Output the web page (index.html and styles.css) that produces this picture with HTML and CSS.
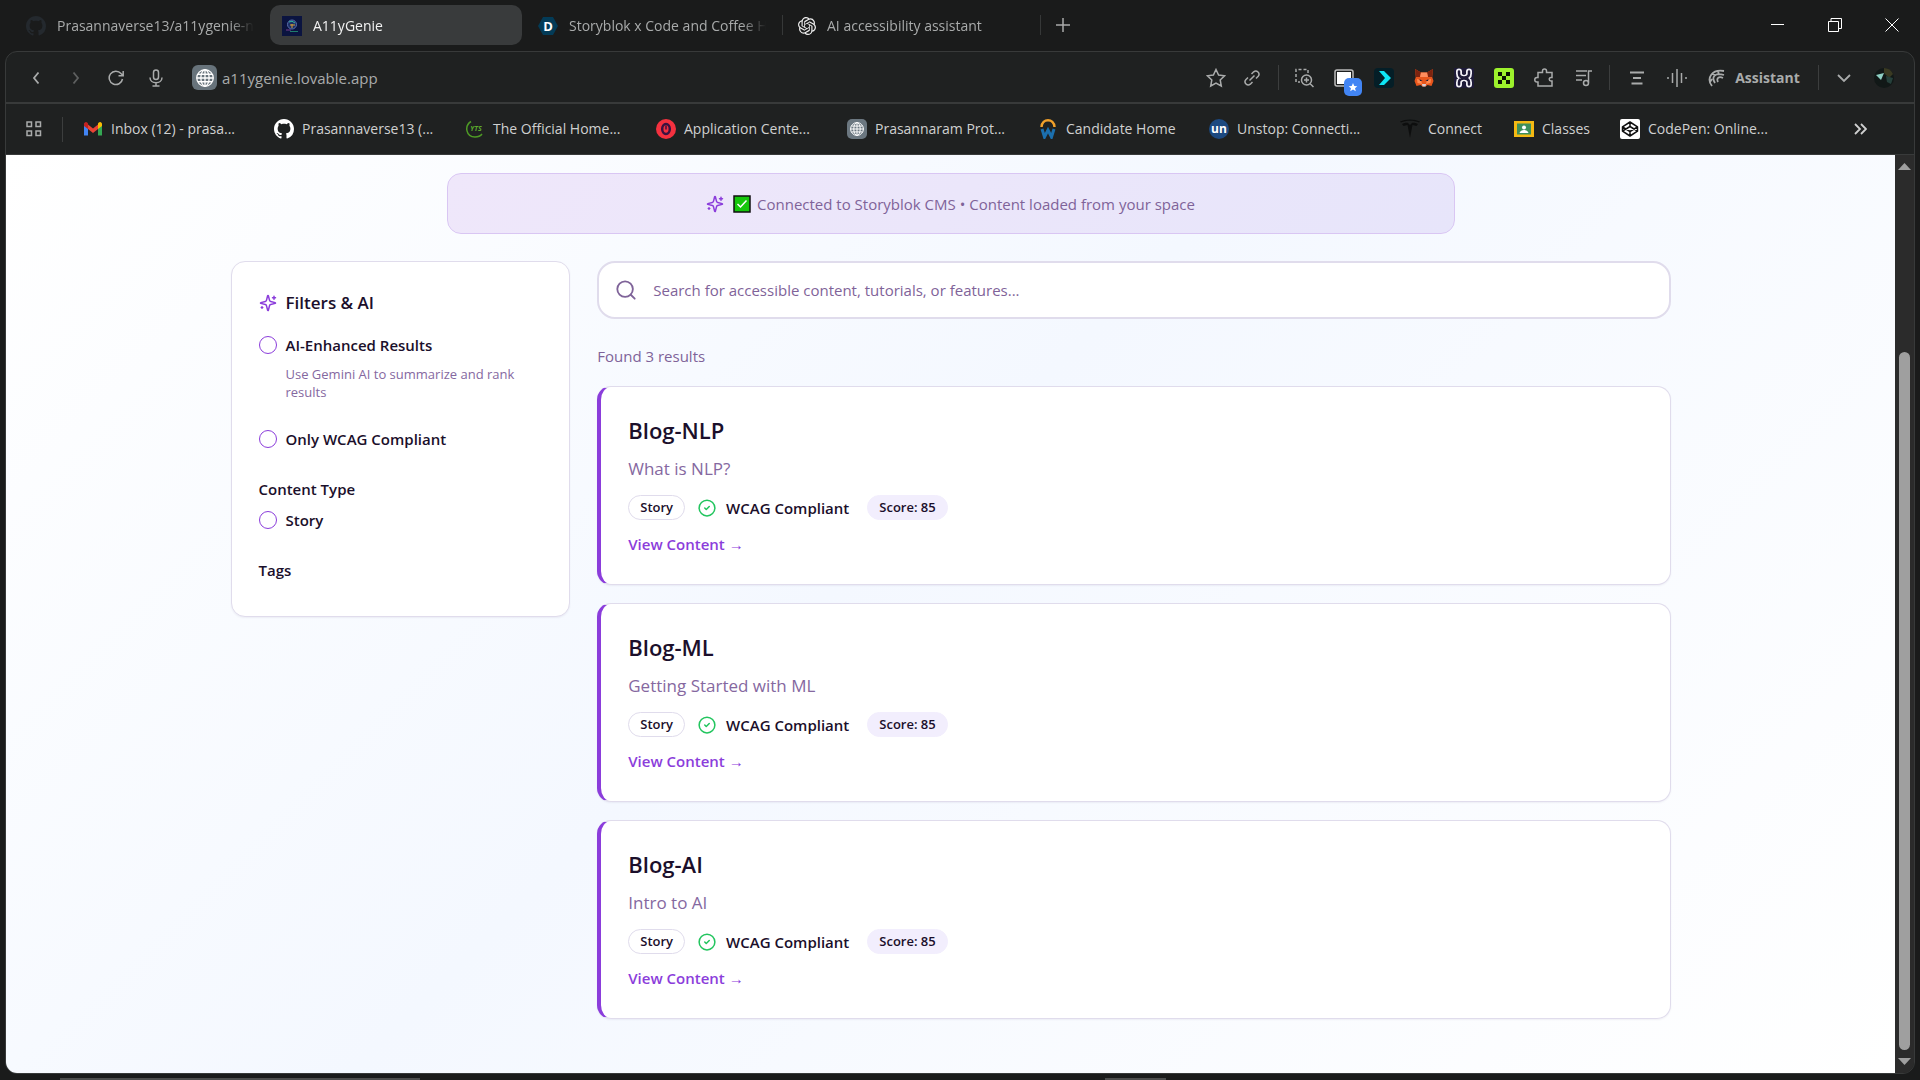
FILE: index.html
```html
<!DOCTYPE html>
<html lang="en">
<head>
<meta charset="utf-8">
<meta name="viewport" content="width=device-width, initial-scale=1">
<title>A11yGenie</title>
<link rel="stylesheet" href="styles.css">
</head>
<body>
<svg class="defs" aria-hidden="true">
  <symbol id="i-github" viewBox="0 0 16 16"><path fill="currentColor" d="M8 0C3.58 0 0 3.58 0 8c0 3.54 2.29 6.53 5.47 7.59.4.07.55-.17.55-.38 0-.19-.01-.82-.01-1.49-2.01.37-2.53-.49-2.69-.94-.09-.23-.48-.94-.82-1.13-.28-.15-.68-.52-.01-.53.63-.01 1.08.58 1.23.82.72 1.21 1.87.87 2.33.66.07-.52.28-.87.51-1.07-1.78-.2-3.64-.89-3.64-3.95 0-.87.31-1.59.82-2.15-.08-.2-.36-1.02.08-2.12 0 0 .67-.21 2.2.82.64-.18 1.32-.27 2-.27s1.36.09 2 .27c1.53-1.04 2.2-.82 2.2-.82.44 1.1.16 1.92.08 2.12.51.56.82 1.27.82 2.15 0 3.07-1.87 3.75-3.65 3.95.29.25.54.73.54 1.48 0 1.07-.01 1.93-.01 2.2 0 .21.15.46.55.38A8.01 8.01 0 0 0 16 8c0-4.42-3.58-8-8-8z"/></symbol>
  <symbol id="i-globe" viewBox="0 0 24 24"><g fill="none" stroke="currentColor" stroke-width="1.700"><circle cx="12" cy="12" r="11"/><ellipse cx="12" cy="12" rx="5.500" ry="11"/><path d="M1 12h22M12 1v22M2.500 7h19M2.500 17h19"/></g></symbol>
  <symbol id="i-sparkles" viewBox="0 0 24 24"><path fill="none" stroke="currentColor" stroke-width="2" stroke-linecap="round" stroke-linejoin="round" d="M9.937 15.5A2 2 0 0 0 8.5 14.063l-6.135-1.582a.5.5 0 0 1 0-.962L8.5 9.936A2 2 0 0 0 9.937 8.5l1.582-6.135a.5.5 0 0 1 .963 0L14.063 8.5A2 2 0 0 0 15.5 9.937l6.135 1.581a.5.5 0 0 1 0 .964L15.5 14.063a2 2 0 0 0-1.437 1.437l-1.582 6.135a.5.5 0 0 1-.963 0zM20 3v4M22 5h-4M4 17v2M5 18H3"/></symbol>
  <symbol id="i-check" viewBox="0 0 24 24"><g fill="none" stroke="currentColor" stroke-width="2" stroke-linecap="round" stroke-linejoin="round"><circle cx="12" cy="12" r="10.5"/><path d="m9 12 2 2 4-4"/></g></symbol>
</svg>

<header class="tabstrip">
  <nav class="tabs" aria-label="Tabs">
    <a class="tab" href="#t1"><svg class="ico20 dim-mark"><use href="#i-github"/></svg><span class="tab-title">Prasannaverse13/a11ygenie-nexus</span></a>
    <a class="tab tab-active" href="#t2"><svg class="ico20" viewBox="0 0 20 20"><rect width="20" height="20" fill="#0b1440"/><circle cx="10" cy="8.500" r="4.500" fill="#1c2f66" stroke="#5a6fae"/><path d="M7 6q3-2 6 1" stroke="#2fb7a0" fill="none"/><path d="M8 9h5M10 8v4" stroke="#d9a23c"/><path d="M4 14h5" stroke="#7a3f8f"/><path d="M8 15.500h8" stroke="#1f7d6c"/></svg><span class="tab-title">A11yGenie</span></a>
    <a class="tab" href="#t3"><svg class="ico20" viewBox="0 0 20 20"><path d="M5 1h10l5 9-5 9H5l-5-9z" fill="#033b57"/><text x="10" y="15" text-anchor="middle" class="glyph-d">D</text></svg><span class="tab-title">Storyblok x Code and Coffee Hackathon</span></a>
    <a class="tab tab-sep" href="#t4"><svg class="ico18" viewBox="0 0 24 24"><path fill="#eee" d="M22.2819 9.8211a5.9847 5.9847 0 0 0-.5157-4.9108 6.0462 6.0462 0 0 0-6.5098-2.9A6.0651 6.0651 0 0 0 4.9807 4.1818a5.9847 5.9847 0 0 0-3.9977 2.9 6.0462 6.0462 0 0 0 .7427 7.0966 5.98 5.98 0 0 0 .511 4.9107 6.051 6.051 0 0 0 6.5146 2.9001A5.9847 5.9847 0 0 0 13.2599 24a6.0557 6.0557 0 0 0 5.7718-4.2058 5.9894 5.9894 0 0 0 3.9977-2.9001 6.0557 6.0557 0 0 0-.7475-7.0729zm-9.022 12.6081a4.4755 4.4755 0 0 1-2.8764-1.0408l.1419-.0804 4.7783-2.7582a.7948.7948 0 0 0 .3927-.6813v-6.7369l2.02 1.1686a.071.071 0 0 1 .038.052v5.5826a4.504 4.504 0 0 1-4.4945 4.4944zm-9.6607-4.1254a4.4708 4.4708 0 0 1-.5346-3.0137l.142.0852 4.783 2.7582a.7712.7712 0 0 0 .7806 0l5.8428-3.3685v2.3324a.0804.0804 0 0 1-.0332.0615L9.74 19.9502a4.4992 4.4992 0 0 1-6.1408-1.6464zM2.3408 7.8956a4.485 4.485 0 0 1 2.3655-1.9728V11.6a.7664.7664 0 0 0 .3879.6765l5.8144 3.3543-2.0201 1.1685a.0757.0757 0 0 1-.071 0l-4.8303-2.7865A4.504 4.504 0 0 1 2.3408 7.872zm16.5963 3.8558L13.1038 8.364 15.1192 7.2a.0757.0757 0 0 1 .071 0l4.8303 2.7913a4.4944 4.4944 0 0 1-.6765 8.1042v-5.6772a.79.79 0 0 0-.407-.667zm2.0107-3.0231l-.142-.0852-4.7735-2.7818a.7759.7759 0 0 0-.7854 0L9.409 9.2297V6.8974a.0662.0662 0 0 1 .0284-.0615l4.8303-2.7866a4.4992 4.4992 0 0 1 6.6802 4.66zM8.3065 12.863l-2.02-1.1638a.0804.0804 0 0 1-.038-.0567V6.0742a4.4992 4.4992 0 0 1 7.3757-3.4537l-.142.0805L8.704 5.459a.7948.7948 0 0 0-.3927.6813zm1.0976-2.3654l2.602-1.4998 2.6069 1.4998v2.9994l-2.5974 1.4997-2.6067-1.4997Z"/></svg><span class="tab-title">AI accessibility assistant</span></a>
    <button class="new-tab" aria-label="New tab"><svg class="ico14" viewBox="0 0 14 14"><path d="M7 0v14M0 7h14" stroke="currentColor" stroke-width="1.500"/></svg></button>
  </nav>
  <div class="win-buttons">
    <button aria-label="Minimize"><svg class="ico14" viewBox="0 0 14 14"><path d="M0 6.500h13" stroke="currentColor"/></svg></button>
    <button aria-label="Restore"><svg class="ico14" viewBox="0 0 14 14"><path d="M.5 3.500h10v10H.5zM3 3.500v-3h10.500v10H11" fill="none" stroke="currentColor"/></svg></button>
    <button aria-label="Close"><svg class="ico14" viewBox="0 0 14 14"><path d="M.5.5l13 13M13.500.5l-13 13" stroke="currentColor"/></svg></button>
  </div>
</header>

<div class="frame">
  <div class="toolbar">
    <div class="nav-buttons">
      <button aria-label="Back"><svg class="ico16" viewBox="0 0 16 16"><path d="M10.500 2.500 6 8l4.500 5.500" class="ln2"/></svg></button>
      <button aria-label="Forward" class="faded"><svg class="ico16" viewBox="0 0 16 16"><path d="M5.500 2.500 10 8l-4.500 5.500" class="ln2"/></svg></button>
      <button aria-label="Reload"><svg class="ico16" viewBox="0 0 16 16"><path d="M14.500 9A6.700 6.700 0 1 1 13 3.500L15 5.500M15.200 1v4.800h-4.700" class="ln"/></svg></button>
      <button aria-label="Voice search"><svg class="ico18" viewBox="0 0 18 18"><rect x="6.500" y="1" width="5" height="9.500" rx="2.500" class="ln"/><path d="M3 8.500c0 7 12 7 12 0M9 13.500V17M5.500 17h7" class="ln"/></svg></button>
    </div>
    <div class="address">
      <span class="site-badge"><svg class="ico18"><use href="#i-globe"/></svg></span>
      <input class="url" type="text" aria-label="Address" value="a11ygenie.lovable.app">
    </div>
    <div class="url-actions">
      <button aria-label="Bookmark"><svg class="ico20" viewBox="0 0 20 20"><path d="m10 1.500 2.600 5.500 6 .8-4.400 4.200 1.100 6L10 15l-5.300 3 1.100-6L1.400 7.800l6-.8z" class="ln"/></svg></button>
      <button aria-label="Copy link"><svg class="ico16" viewBox="0 0 16 16"><path d="m5.500 10.500 5-5M7.500 4 9.700 1.800a3.200 3.200 0 0 1 4.500 4.500L12 8.500M8.500 12l-2.200 2.200a3.200 3.200 0 0 1-4.500-4.500L4 7.500" class="ln"/></svg></button>
    </div>
    <span class="vsep"></span>
    <div class="extensions">
      <button aria-label="Search in page"><svg class="ico20" viewBox="0 0 20 20"><path d="M14 5V1.500H2V14h4" class="ln" stroke-dasharray="3 2"/><circle cx="12.500" cy="12" r="5" class="ln"/><path d="M10 12h5M12.500 9.500v5M16.200 15.700l3.300 3.300" class="ln"/></svg></button>
      <button aria-label="Saved tabs" class="has-badge"><svg class="ico20" viewBox="0 0 20 20"><rect x="1" y="2" width="18" height="16" rx="2" fill="#1d1f1f" stroke="#bbb" stroke-width="1.500"/><path d="M3 4h14v12H3z" fill="#fff"/></svg><svg class="star-badge" viewBox="0 0 18 18"><rect width="18" height="18" rx="5" fill="#4285f4"/><path d="m9 5 1.300 2.900 3 .3-2.300 2 .8 3L9 11.600l-2.800 1.600.8-3-2.300-2 3-.3z" fill="#fff"/></svg></button>
      <button aria-label="Arrow extension"><svg class="ico20" viewBox="0 0 20 20"><rect width="20" height="20" rx="4" fill="#041e27"/><path d="M5 3h5l7 7-7 7H5l6-7z" fill="#0ee6f5"/></svg></button>
      <button aria-label="Wallet"><svg class="ico20" viewBox="0 0 20 20"><path d="m1 1 6 3.500h6L19 1l-.8 8 1.300 4-2 5-4-1-2 1.500h-3L6.500 17l-4 1-2-5L1.800 9z" fill="#e8561c"/><path d="m1 1 6 3.500L6 9H1.800zM19 1l-6 3.500L14 9h4.200z" fill="#7d2410"/><path d="M7 4.500h6l1 4.500H6z" fill="#ff8d5d"/><path d="m3 11 4 1 1 4-4.500-1zM17 11l-4 1-1 4 4.500-1z" fill="#ff8a50"/><path d="m5.500 11 3 2H6zM14.500 11l-3 2H14z" fill="#1c1c3a"/><path d="M8 16h4l-.5 2.500h-3z" fill="#d6cfd8"/></svg></button>
      <button aria-label="H extension"><svg class="ico20" viewBox="0 0 20 20"><rect width="20" height="20" fill="#1e1b38"/><path d="M5 3.500v2c0 3 2 4 5 4s5-1 5-4v-2M5 16.500v-2c0-3 2-4 5-4s5 1 5 4v2" fill="none" stroke="#f1f0f6" stroke-width="6" stroke-linecap="round"/><path d="M5 3.500v2c0 3 2 4 5 4s5-1 5-4v-2M5 16.500v-2c0-3 2-4 5-4s5 1 5 4v2" fill="none" stroke="#1e1b38" stroke-width="2.500" stroke-linecap="round"/><path d="M10 1v6M10 13v6" stroke="#1e1b38" stroke-width="1.500"/></svg></button>
      <button aria-label="Green extension"><svg class="ico20" viewBox="0 0 20 20"><rect width="20" height="20" rx="3" fill="#9df22c"/><path d="M4 4h4v4H4zM12 4h4v4h-4zM8 8h4v4H8zM4 12h4v4H4zM12 12h4v4h-4z" fill="#0c1502"/></svg></button>
      <button aria-label="Extensions"><svg class="ico20" viewBox="0 0 20 20"><path d="M4 4.500h4.500V3a2 2 0 0 1 4 0v1.500H18v5h-1a1.700 1.700 0 0 0 0 3.500h1v5H4v-4H3a2 2 0 0 1 0-4.500h1z" class="ln"/></svg></button>
      <button aria-label="Media"><svg class="ico18" viewBox="0 0 18 18"><path d="M1 2h11M1 6.500h10M1 11h6M17 2h-3.500v11.500" class="ln"/><circle cx="11" cy="14" r="2.500" class="ln"/></svg></button>
    </div>
    <span class="vsep"></span>
    <div class="tools">
      <button aria-label="Reader"><svg class="ico16" viewBox="0 0 16 16"><path d="M1 2.500h14M4 8h8M2.500 13.500h11" class="ln2"/></svg></button>
      <button aria-label="Voice"><svg class="ico20" viewBox="0 0 20 20"><path d="M1 9v2M5.500 5v10M10 1v18M14.500 5v10M19 9v2" class="ln"/></svg></button>
      <button class="assistant"><svg class="ico18" viewBox="0 0 18 18"><path d="M4 17C-2 9 4 0 16 2M7 14C3 8 7 3 16 6M10 13c-2-4 1-6 5-4M2 13 4 10M4 5l3 1M10 2l1 4" class="ln2"/></svg>Assistant</button>
    </div>
    <span class="vsep"></span>
    <div class="profile">
      <button aria-label="More"><svg class="ico14" viewBox="0 0 14 14"><path d="m1 4 6 6 6-6" class="ln2"/></svg></button>
      <button aria-label="Profile"><svg class="ico20" viewBox="0 0 20 20"><circle cx="10" cy="10" r="10" fill="#111817"/><path d="M10 0a10 10 0 0 1 9 6l-4 4-5-5z" fill="#3a3a22"/><path d="M12 8l7 2-2 6-4-2z" fill="#26413c"/><path d="m2 7 8-2-3 7z" fill="#8fd0c4"/></svg></button>
    </div>
  </div>

  <nav class="bookmarks" aria-label="Bookmarks">
    <button class="apps" aria-label="Bookmark folders"><svg class="ico16" viewBox="0 0 16 16"><path d="M1 1h4.500v4.500H1zM10 1h4.500v4.500H10zM1 10h4.500v4.500H1zM10 10h4.500v4.500H10z" class="ln"/></svg></button>
    <div class="bookmark-list">
      <a href="#b1"><svg class="ico20" viewBox="0 0 20 20"><path d="M1 4v12.500h4V9z" fill="#4285f4"/><path d="M19 4v12.500h-4V9z" fill="#34a853"/><path d="M5 5.500 10 9.500l5-4V10l-5 4-5-4z" fill="#ea4335"/><path d="M1 7V5a2 2 0 0 1 3.200-1.500L5 4.500V10z" fill="#c5221f"/><path d="M19 7V5a2 2 0 0 0-3.200-1.500L15 4.500V10z" fill="#fbbc04"/></svg>Inbox (12) - prasa...</a>
      <a href="#b2"><svg class="ico20 white"><use href="#i-github"/></svg>Prasannaverse13 (...</a>
      <a href="#b3"><svg class="ico20" viewBox="0 0 20 20"><path d="M6 2.500C-1 7 1 18 10 18c3 0 5.500-1 7-3" fill="none" stroke="#4e9a25" stroke-width="1.500"/><text x="11" y="12" text-anchor="middle" class="glyph-yts">YTS</text></svg>The Official Home...</a>
      <a href="#b4"><svg class="ico20" viewBox="0 0 20 20"><circle cx="10" cy="10" r="10" fill="#f4313f"/><ellipse cx="10" cy="10" rx="3.800" ry="5" fill="none" stroke="#3c1240" stroke-width="2.500"/><path d="M10 6.500v4" stroke="#3c1240" stroke-width="1.500"/></svg>Application Cente...</a>
      <a href="#b5"><svg class="ico20" viewBox="0 0 20 20"><rect width="20" height="20" rx="5" fill="#6b7780"/><use href="#i-globe" x="3" y="3" width="14" height="14" class="white"/></svg>Prasannaram Prot...</a>
      <a href="#b6"><svg class="ico20" viewBox="0 0 20 20"><path d="M3.500 8C4 -1 16 -1 16.500 8" fill="none" stroke="#f0a02a" stroke-width="2.500"/><path d="m4 10 2.500 8L10 11l3.500 7L16 10" fill="none" stroke="#1b6fae" stroke-width="3"/></svg>Candidate Home</a>
      <a href="#b7"><svg class="ico20" viewBox="0 0 20 20"><circle cx="10" cy="10" r="10" fill="#1c4980"/><text x="10" y="14" text-anchor="middle" class="glyph-un">un</text></svg>Unstop: Connecti...</a>
      <a href="#b8"><svg class="ico20" viewBox="0 0 20 20"><path d="M0 2.500C6-.3 14-.3 20 2.500l-1 1C14 1 6 1 1 3.500zM2 5c2-1 5-1.500 6-1l2 2 2-2c1-.5 4 0 6 1l-1.500 2-4-1L10 19 7.500 6l-4 1z" fill="#0d0e0e"/></svg>Connect</a>
      <a href="#b9"><svg class="ico20" viewBox="0 0 20 20"><path d="M0 2h20v16H0z" fill="#f4b913"/><path d="M3 4.500h14v11H3z" fill="#3d8f5a"/><circle cx="10" cy="8.500" r="2" fill="#fff"/><path d="M5.500 14c1-4 8-4 9 0z" fill="#fff"/></svg>Classes</a>
      <a href="#b10"><svg class="ico20" viewBox="0 0 20 20"><rect width="20" height="20" rx="2" fill="#fff"/><path d="m10 3 7.500 4.800v4.400L10 17l-7.500-4.800V7.800zM10 3v4.500M10 12.500V17M2.500 7.800l7.500 4.700 7.500-4.700M2.500 12.200 10 7.500l7.500 4.700" fill="none" stroke="#111" stroke-width="1.500" stroke-linejoin="round"/></svg>CodePen: Online...</a>
    </div>
    <button class="overflow" aria-label="More bookmarks"><svg class="ico14" viewBox="0 0 14 14"><path d="m2 2 5 5-5 5M8 2l5 5-5 5" class="ln2"/></svg></button>
  </nav>

  <div class="viewport">
    <main class="page">
      <div class="banner">
        <svg class="ico18 purple"><use href="#i-sparkles"/></svg>
        <p><svg class="ico18 tick" viewBox="0 0 18 18"><rect x="1" y="1" width="16" height="16" fill="#16c60c" stroke="#101010" stroke-width="1.500"/><path d="m4.500 9 3 3 6-6.500" fill="none" stroke="#fff" stroke-width="1.500"/></svg>Connected to Storyblok CMS • Content loaded from your space</p>
      </div>
      <div class="layout">
        <aside class="filters">
          <h2><svg class="ico18 purple"><use href="#i-sparkles"/></svg>Filters &amp; AI</h2>
          <div class="option">
            <label><input type="checkbox">AI-Enhanced Results</label>
            <p class="hint">Use Gemini AI to summarize and rank results</p>
          </div>
          <label><input type="checkbox">Only WCAG Compliant</label>
          <div class="group">
            <h3>Content Type</h3>
            <label><input type="checkbox">Story</label>
          </div>
          <div class="group"><h3>Tags</h3></div>
        </aside>
        <section class="results">
          <div class="search">
            <svg class="ico22" viewBox="0 0 24 24"><g fill="none" stroke="currentColor" stroke-width="2" stroke-linecap="round"><circle cx="11" cy="11" r="8.500"/><path d="m21.500 21.500-4.300-4.300"/></g></svg>
            <input type="search" aria-label="Search content" placeholder="Search for accessible content, tutorials, or features...">
          </div>
          <p class="count">Found 3 results</p>
          <article class="card">
            <h3>Blog-NLP</h3>
            <p class="desc">What is NLP?</p>
            <div class="meta"><span class="chip">Story</span><span class="wcag"><svg class="ico18 green"><use href="#i-check"/></svg>WCAG Compliant</span><span class="chip score">Score: 85</span></div>
            <a class="view" href="#nlp">View Content →</a>
          </article>
          <article class="card">
            <h3>Blog-ML</h3>
            <p class="desc">Getting Started with ML</p>
            <div class="meta"><span class="chip">Story</span><span class="wcag"><svg class="ico18 green"><use href="#i-check"/></svg>WCAG Compliant</span><span class="chip score">Score: 85</span></div>
            <a class="view" href="#ml">View Content →</a>
          </article>
          <article class="card">
            <h3>Blog-AI</h3>
            <p class="desc">Intro to AI</p>
            <div class="meta"><span class="chip">Story</span><span class="wcag"><svg class="ico18 green"><use href="#i-check"/></svg>WCAG Compliant</span><span class="chip score">Score: 85</span></div>
            <a class="view" href="#ai">View Content →</a>
          </article>
        </section>
      </div>
    </main>
    <div class="scrollbar" aria-hidden="true">
      <svg viewBox="0 0 13 7"><path d="M6.500 0 13 7H0z" fill="currentColor"/></svg>
      <div class="track"><div class="thumb"></div></div>
      <svg viewBox="0 0 13 7"><path d="M0 0h13L6.500 7z" fill="currentColor"/></svg>
    </div>
  </div>
</div>
<footer class="shelf"><span class="shelf-window"></span><span class="shelf-pill"></span></footer>
</body>
</html>
```
FILE: styles.css
```css
*, *::before, *::after { box-sizing: border-box; }

body {
  margin: 0;
  min-height: 100vh;
  display: flex;
  flex-direction: column;
  background: #1a1b1b;
  color: #a9abab;
  font: 15px/24px "Open Sans", "Noto Sans", sans-serif;
}

h2, h3, p { margin: 0; }
a { color: inherit; text-decoration: none; }
svg { display: block; flex: none; }
button, input { font: inherit; color: inherit; }
button {
  display: flex;
  align-items: center;
  justify-content: center;
  padding: 0;
  border: 0;
  background: none;
}

.defs { position: absolute; width: 0; height: 0; }
.ico14 { width: 14px; height: 14px; }
.ico16 { width: 16px; height: 16px; }
.ico18 { width: 18px; height: 18px; }
.ico20 { width: 20px; height: 20px; }
.ico22 { width: 22px; height: 22px; }
.ln, .ln2 { fill: none; stroke: currentColor; stroke-width: 1.5; }
.ln2 { stroke-width: 1.8; }
.white { color: #fff; }
.purple { color: #8b3ddb; }
.green { color: #22c55e; }
.dim-mark { color: #24292e; }
.glyph-d { font: bold 13px "Open Sans", sans-serif; fill: #fff; }
.glyph-yts { font: italic bold 7px "Open Sans", sans-serif; fill: #5bab2c; }
.glyph-un { font: bold 12px "Open Sans", sans-serif; fill: #fff; }

/* Tab strip */
.tabstrip {
  display: flex;
  justify-content: space-between;
  height: 51px;
  padding: 5px 0 6px 14px;
}
.tabs { display: flex; }
.tab {
  display: flex;
  align-items: center;
  gap: 11px;
  width: 252px;
  height: 40px;
  margin-right: 4px;
  padding: 1px 12px 0;
  border-radius: 10px;
  font-size: 14px;
}
.tab-title {
  flex: 1;
  overflow: hidden;
  white-space: nowrap;
  mask-image: linear-gradient(to right, #000 calc(100% - 24px), transparent);
}
.tab-active { background: #393b3c; color: #f2f2f2; }
.tab-sep {
  width: 259px;
  background: linear-gradient(#363838, #363838) 0 50% / 1px 20px no-repeat,
              linear-gradient(#363838, #363838) 100% 50% / 1px 20px no-repeat;
  border-radius: 0;
  padding: 1px 16px 0;
}
.new-tab { width: 36px; }
.win-buttons { display: flex; color: #fff; }
.win-buttons button { width: 57px; }

/* Window frame */
.frame {
  flex: 1;
  display: flex;
  flex-direction: column;
  margin: 0 5px;
  border: 1px solid #383a3a;
  border-radius: 12px;
  background: #1f2121;
  overflow: hidden;
}
.toolbar {
  display: flex;
  align-items: center;
  height: 52px;
  padding-top: 1px;
  border-bottom: 2px solid #383a3a;
}
.nav-buttons { display: flex; padding-left: 10px; }
.nav-buttons button { width: 40px; height: 40px; }
.faded { opacity: .45; }
.address { flex: 1; display: flex; align-items: center; gap: 5px; padding-left: 16px; }
.site-badge {
  display: grid;
  place-items: center;
  width: 25px;
  height: 25px;
  border-radius: 6px;
  background: #67737b;
  color: #fff;
}
.url { flex: 1; padding: 0; border: 0; background: none; outline: 0; }
.url-actions { display: flex; padding-right: 8px; }
.url-actions button { width: 36px; }
.vsep { width: 1px; height: 25px; background: #3c3e3e; }
.extensions, .tools { display: flex; padding: 0 5px; }
.extensions button, .tools button, .profile button { width: 40px; height: 40px; }
.tools { padding: 0 7px; }
.has-badge { position: relative; }
.star-badge { position: absolute; left: 20px; top: 20px; width: 18px; height: 18px; }
.tools .assistant { width: 114px; gap: 9px; font-size: 14px; font-weight: 700; }
.profile { display: flex; padding: 0 10px 0 5px; }

/* Bookmarks */
.bookmarks {
  display: flex;
  align-items: center;
  height: 51px;
  border-bottom: 1px solid #383a3a;
  color: #cfd0d0;
  font-size: 14px;
}
.apps { width: 57px; height: 25px; border-right: 1px solid #3c3e3e; color: #a9abab; }
.bookmark-list {
  flex: 1;
  display: grid;
  grid-template-columns: repeat(5, 191px) 171px 191px 114px 106px auto;
  padding-left: 20px;
  white-space: nowrap;
}
.bookmark-list a { display: flex; align-items: center; gap: 8px; }
.overflow { width: 108px; height: 40px; }

/* Page */
.viewport { flex: 1; display: flex; }
.page {
  flex: 1;
  padding: 18px 27px 54px;
  background: linear-gradient(135deg, #fff, #f4f8ff 45%, #fff);
  color: #1b0f2b;
}
.banner {
  display: flex;
  align-items: center;
  justify-content: center;
  gap: 9px;
  max-width: 1008px;
  height: 61px;
  margin: 0 auto 27px;
  border: 1px solid #d9c6f3;
  border-radius: 14px;
  background: linear-gradient(135deg, #efe7fa, #e7e5fa);
  color: #7f6399;
}
.banner p { display: flex; align-items: center; gap: 6px; }
.layout {
  display: grid;
  grid-template-columns: repeat(4, 1fr);
  gap: 27px;
  align-items: start;
  max-width: 1440px;
  margin: 0 auto;
}
.filters, .card {
  border: 1px solid #e0dcec;
  border-radius: 14px;
  background: #fff;
  box-shadow: 0 1px 2px rgba(40, 20, 80, .06);
}
.filters {
  display: flex;
  flex-direction: column;
  padding: 27px;
  font-weight: 600;
}
.filters h2 {
  display: flex;
  align-items: center;
  gap: 9px;
  margin-bottom: 16px;
  font-size: 17px;
  font-weight: 600;
  line-height: 28px;
}
.filters label { display: flex; align-items: center; gap: 9px; }
.filters input {
  appearance: none;
  width: 18px;
  height: 18px;
  margin: 0;
  border: 1px solid #8b3ddb;
  border-radius: 50%;
}
.hint {
  margin: 8px 27px 26px;
  color: #85689f;
  font-size: 13px;
  font-weight: 400;
  line-height: 18px;
}
.group { margin-top: 26px; }
.filters h3 { margin-bottom: 7px; font-size: 15px; font-weight: 600; }

.results {
  grid-column: span 3;
  display: flex;
  flex-direction: column;
  gap: 18px;
}
.search {
  display: flex;
  align-items: center;
  gap: 16px;
  height: 58px;
  padding: 0 16px;
  border: 2px solid #e0dcec;
  border-radius: 18px;
  background: #fff;
  color: #7f6399;
}
.search input { flex: 1; padding: 0; border: 0; outline: 0; background: none; }
.search input::placeholder { color: #7f6399; opacity: 1; }
.count { padding-top: 7px; color: #7f6399; }
.card {
  display: flex;
  flex-direction: column;
  align-items: flex-start;
  padding: 27px 27px 28px;
  border-left: 4px solid #8b3ddb;
}
.card h3 { font-size: 22px; font-weight: 600; line-height: 32px; }
.desc { margin: 9px 0 13px; color: #85689f; font-size: 17px; line-height: 27px; }
.meta { display: flex; align-items: center; margin-bottom: 12px; font-weight: 600; }
.chip {
  padding: 0 11px;
  border: 1px solid #e0dcec;
  border-radius: 13px;
  font-size: 13px;
  line-height: 23px;
}
.wcag { display: flex; align-items: center; gap: 10px; margin: 0 18px 0 13px; }
.score { border-color: #f2eefd; background: #f2eefd; }
.view { color: #8b3ddb; font-weight: 600; }

/* Scrollbar */
.scrollbar {
  display: flex;
  flex-direction: column;
  align-items: center;
  width: 19px;
  padding: 8px 0;
  background: #2b2b2b;
  color: #9f9f9f;
}
.scrollbar svg { width: 13px; height: 7px; }
.track { flex: 1; display: flex; flex-direction: column; justify-content: flex-end; padding: 8px 0; }
.thumb { width: 11px; height: 80%; border-radius: 6px; background: #9f9f9f; }

.shelf { display: flex; align-items: flex-end; height: 6px; padding-left: 60px; }
.shelf-window { width: 360px; height: 2px; background: #4c4d4d; }
.shelf-pill { width: 61px; height: 2px; margin-left: 685px; background: #4c4d4d; }
```
